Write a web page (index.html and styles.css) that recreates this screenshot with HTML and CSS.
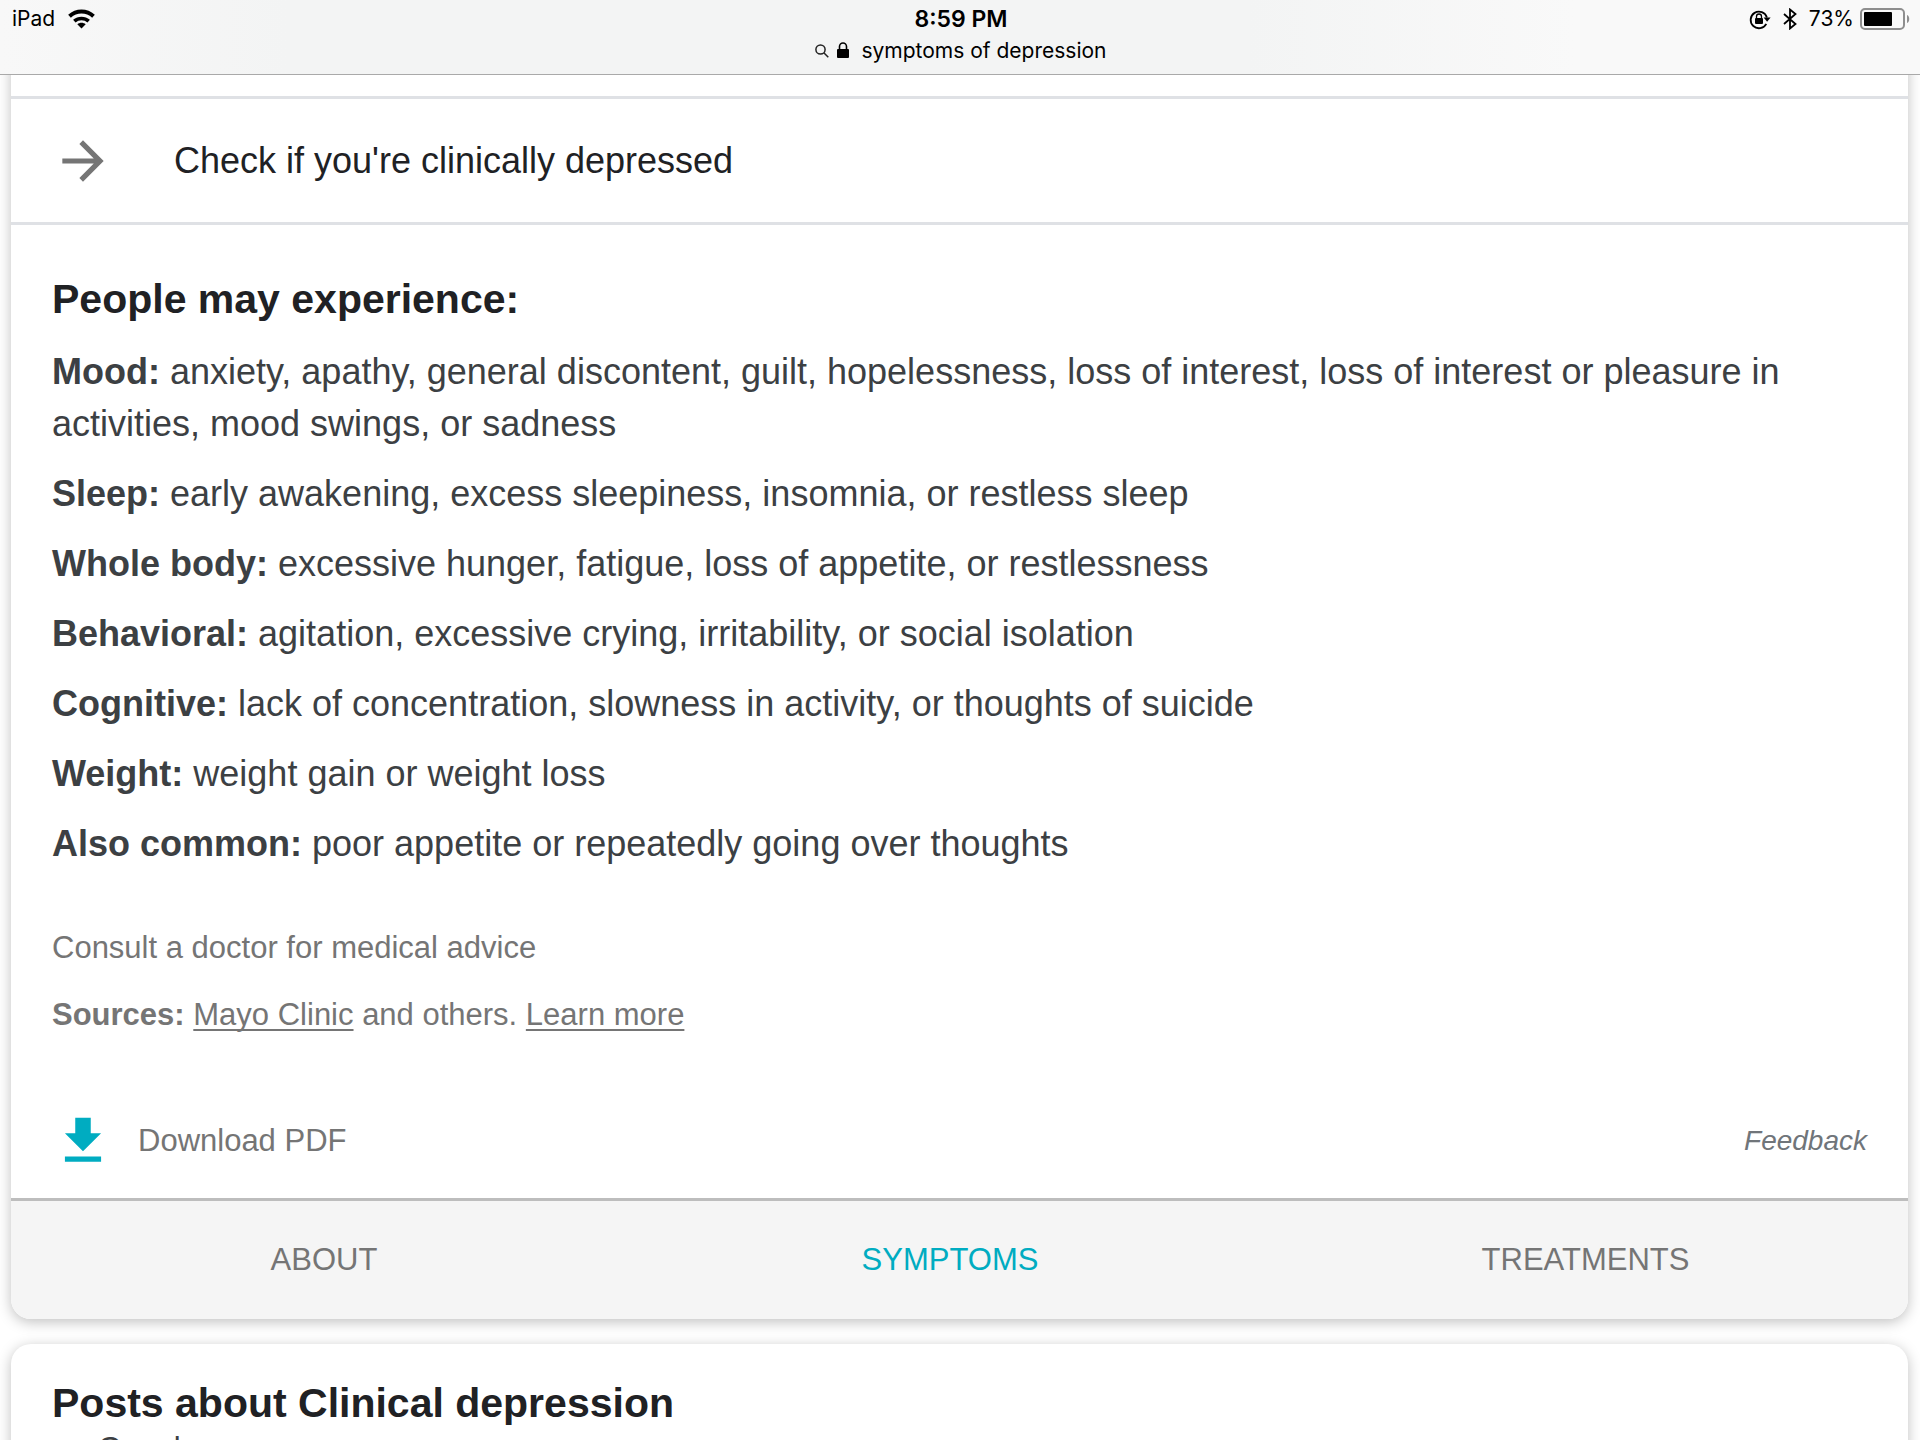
FILE: index.html
```
<!DOCTYPE html>
<html lang="en">
<head>
    <meta charset="UTF-8">
    <meta name="viewport" content="width=device-width, initial-scale=1.0">
    <title>symptoms of depression</title>
    <link rel="stylesheet" href="styles.css">
</head>
<body>
<header class="browser-bar">
    <div class="status">
        <div class="status-left">
            <span>iPad</span>
            <svg width="27" height="20" viewBox="0 0 27 20" fill="none" stroke="#000">
                <path d="M1.500 7.200C8.500.9 18.500.9 25.500 7.200" stroke-width="4"/>
                <path d="M6.300 12.200C10.500 8.500 16.500 8.500 20.700 12.200" stroke-width="3.600"/>
                <path d="M13.500 19.500L9.300 15.300C11.700 13.300 15.300 13.300 17.700 15.300z" fill="#000" stroke="none"/>
            </svg>
        </div>
        <div class="clock">8:59 PM</div>
        <div class="status-right">
            <svg width="22" height="22" viewBox="0 0 22 22">
                <path d="M17.300 15.800A8.300 8.300 0 1 1 17.900 9.500" fill="none" stroke="#000" stroke-width="1.800"/>
                <path d="M14.600 9.600h7l-3.500 4.200z"/>
                <rect x="6" y="10" width="8" height="6" rx="1"/>
                <path d="M7.500 10.500V8.500a2.500 2.500 0 0 1 5 0v2" fill="none" stroke="#000" stroke-width="1.300"/>
            </svg>
            <svg class="bluetooth" width="14" height="22" viewBox="0 0 14 22" fill="none" stroke="#000" stroke-width="1.800">
                <path d="M1 6l11.500 10L7 20.500v-19L12.500 6 1 16"/>
            </svg>
            <span>73%</span>
            <svg class="battery" width="50" height="22" viewBox="0 0 50 22">
                <rect x="1" y="1" width="43" height="20" rx="4" fill="none" stroke="#8e8e8e" stroke-width="2"/>
                <rect x="4" y="4" width="28" height="14" rx="1"/>
                <path d="M47 7c3 1 3 7 0 8z" fill="#8e8e8e"/>
            </svg>
        </div>
    </div>
    <div class="address">
        <svg width="14" height="14" viewBox="0 0 14 14" fill="none" stroke="#222" stroke-width="1.500">
            <circle cx="5.500" cy="5.500" r="4.600"/>
            <path d="M8.800 8.800l4.500 4.500"/>
        </svg>
        <svg width="12" height="17" viewBox="0 0 12 17">
            <rect y="7" width="12" height="9" rx="1"/>
            <path d="M2.500 8V4.500a3.500 3.500 0 0 1 7 0V8" fill="none" stroke="#000" stroke-width="1.600"/>
        </svg>
        <span>symptoms of depression</span>
    </div>
</header>

<main>
    <section class="card symptoms">
        <a class="check" href="#">
            <svg class="icon" viewBox="0 0 24 24"><path d="M12 4l-1.410 1.410L16.170 11H4v2h12.170l-5.580 5.590L12 20l8-8z"/></svg>
            <span>Check if you're clinically depressed</span>
        </a>

        <div class="content">
            <h2>People may experience:</h2>
            <div class="groups">
                <p><b>Mood:</b> anxiety, apathy, general discontent, guilt, hopelessness, loss of interest, loss of interest or pleasure in activities, mood swings, or sadness</p>
                <p><b>Sleep:</b> early awakening, excess sleepiness, insomnia, or restless sleep</p>
                <p><b>Whole body:</b> excessive hunger, fatigue, loss of appetite, or restlessness</p>
                <p><b>Behavioral:</b> agitation, excessive crying, irritability, or social isolation</p>
                <p><b>Cognitive:</b> lack of concentration, slowness in activity, or thoughts of suicide</p>
                <p><b>Weight:</b> weight gain or weight loss</p>
                <p><b>Also common:</b> poor appetite or repeatedly going over thoughts</p>
            </div>
            <div class="notes">
                <p>Consult a doctor for medical advice</p>
                <p><b>Sources:</b> <a href="#">Mayo Clinic</a> and others. <a href="#">Learn more</a></p>
            </div>
            <div class="actions">
                <a class="download" href="#">
                    <svg class="icon" viewBox="0 0 24 24"><path d="M19 9h-4V3H9v6H5l7 7 7-7zM5 18v2h14v-2z"/></svg>
                    <span>Download PDF</span>
                </a>
                <a class="feedback" href="#">Feedback</a>
            </div>
        </div>

        <nav class="tabs">
            <button type="button">ABOUT</button>
            <button type="button" class="active">SYMPTOMS</button>
            <button type="button">TREATMENTS</button>
        </nav>
    </section>

    <section class="card posts">
        <h2>Posts about Clinical depression</h2>
        <p>Google</p>
    </section>
</main>
</body>
</html>
```
FILE: styles.css
```
* {
    box-sizing: border-box;
}

body {
    margin: 0;
    height: 100vh;
    overflow: hidden;
    background: #fff;
    color: #3c4043;
    font-family: "Liberation Sans", Arial, sans-serif;
}

h2, p {
    margin: 0;
}

a {
    color: inherit;
}

/* status bar and collapsed address bar */
.browser-bar {
    position: relative;
    z-index: 1;
    height: 75px;
    padding: 0 10px 0 12px;
    border-bottom: 1px solid #a9a9a9;
    background: linear-gradient(90deg, #f8f8f8, #f3f4f4 15%, #f3f4f4 65%, #f9f9f9 82%);
    color: #000;
    font-family: Inter, Roboto, sans-serif;
    font-size: 21px;
    line-height: 26px;
}

.status {
    display: grid;
    grid-template-columns: 1fr auto 1fr;
    align-items: center;
    height: 38px;
}

.status-left,
.status-right,
.address {
    display: flex;
    align-items: center;
}

.status-left {
    gap: 13px;
}

.status-right {
    justify-content: flex-end;
}

.clock {
    font-size: 23px;
    font-weight: 600;
}

.bluetooth {
    margin: 0 12px;
}

.battery {
    margin-left: 6px;
}

.address {
    justify-content: center;
    gap: 8px;
    height: 25px;
}

.address span {
    margin-left: 4px;
}

/* cards */
.card {
    margin: 0 12px 25px 11px;
    background: #fff;
    box-shadow: 0 3px 14px rgba(0, 0, 0, 0.25);
}

.card h2 {
    color: #202124;
    font-size: 41px;
    line-height: 52px;
}

/* starts underneath the browser bar */
.symptoms {
    margin-top: -20px;
    padding-top: 41px;
    border-radius: 0 0 20px 20px;
}

.icon {
    width: 62px;
    height: 62px;
    flex: none;
}

.check {
    display: flex;
    align-items: center;
    gap: 60px;
    height: 129px;
    padding: 0 41px;
    border-top: 3px solid #dfe1e5;
    border-bottom: 3px solid #dfe1e5;
    color: #202124;
    font-size: 36px;
    text-decoration: none;
}

.check .icon {
    fill: #757575;
}

.content {
    padding: 48px 41px 26px;
}

.groups {
    display: flex;
    flex-direction: column;
    gap: 18px;
    margin-top: 21px;
    font-size: 36px;
    line-height: 52px;
}

.notes {
    display: flex;
    flex-direction: column;
    gap: 27px;
    margin-top: 58px;
    color: #757575;
    font-size: 31px;
    line-height: 40px;
}

.notes a {
    text-decoration-thickness: 2px;
    text-underline-offset: 4px;
    text-decoration-skip-ink: none;
}

.actions {
    display: flex;
    align-items: center;
    justify-content: space-between;
    margin-top: 75px;
    color: #757575;
}

.download {
    display: flex;
    align-items: center;
    gap: 24px;
    font-size: 31px;
    line-height: 40px;
    text-decoration: none;
}

.download .icon {
    fill: #00acc1;
}

.feedback {
    color: #70757a;
    font-size: 28px;
    font-style: italic;
    text-decoration: none;
}

.tabs {
    display: grid;
    grid-template-columns: 33% 33% 34%;
    border-top: 3px solid #bdbdbd;
    border-radius: 0 0 20px 20px;
    background: #f5f5f5;
}

.tabs button {
    height: 118px;
    padding: 0;
    border: none;
    background: none;
    color: #757575;
    font-family: inherit;
    font-size: 31px;
    cursor: pointer;
}

.tabs .active {
    color: #00acc1;
}

.posts {
    padding: 33px 41px;
    border-radius: 20px;
}

.posts p {
    padding-left: 46px;
    font-size: 31px;
    line-height: 40px;
}
```
